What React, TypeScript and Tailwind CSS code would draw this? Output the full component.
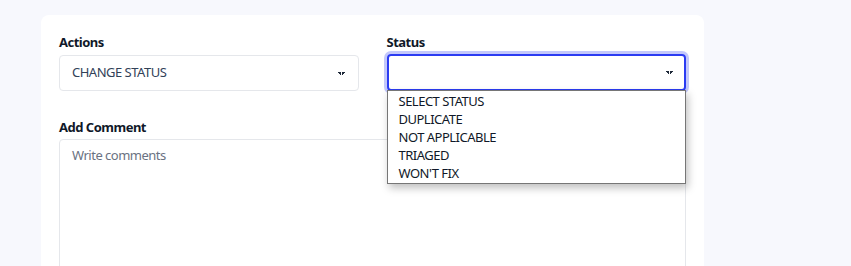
import React from 'react';

const statusOptions = ['SELECT STATUS', 'DUPLICATE', 'NOT APPLICABLE', 'TRIAGED', "WON'T FIX"];

const Caret = () => (
  <svg width="7" height="5" viewBox="0 0 7 5" className="text-gray-800">
    <path d="M0 1h3v1H0zM4 1h3v1H4zM1 2h2v1H1zM4 2h2v1H4zM2 3h1v1H2zM4 3h1v1H4z" fill="currentColor" />
  </svg>
);

const App: React.FC = () => {
  return (
    <div className="h-[266px] overflow-hidden bg-[#f7f8fd] font-['Noto_Sans',sans-serif] tracking-[-0.5px]">
      <div className="ml-[41px] mt-[15px] w-[663px] h-[300px] rounded-lg bg-white px-[18px] pt-[17px]">
        <div className="grid grid-cols-2 gap-x-[28px]">
          {/* Actions */}
          <div>
            <label className="block text-[13px] font-bold leading-[20px] text-gray-900">Actions</label>
            <div className="mt-[3px] flex h-[36px] items-center justify-between rounded border border-gray-200 pl-[12px] pr-[13px] text-[13px] text-slate-700">
              <span>CHANGE STATUS</span>
              <Caret />
            </div>
          </div>

          {/* Status */}
          <div className="relative">
            <label className="block text-[13px] font-bold leading-[20px] text-gray-900">Status</label>
            <div className="mt-[2px] flex h-[37px] items-center justify-end rounded border-2 border-[#2b3cf2] pr-[11px] ring-[3px] ring-[#c3c8fb]">
              <Caret />
            </div>
            <ul className="absolute left-0 top-[58px] z-10 w-full border border-[#767676] bg-white pl-[11px] pt-px pb-px text-[13px] leading-[18px] text-gray-900 shadow-[2px_4px_8px_rgba(0,0,0,0.25)]">
              {statusOptions.map((opt) => (
                <li key={opt}>{opt}</li>
              ))}
            </ul>
          </div>
        </div>

        {/* Comment */}
        <div className="mt-[26px]">
          <label className="block text-[13px] font-bold leading-[20px] text-gray-900">Add Comment</label>
          <div className="mt-[2px] h-[200px] rounded border border-gray-200 px-[12px] pt-[6px] text-[13px] text-gray-500">
            Write comments
          </div>
        </div>
      </div>
    </div>
  );
};

export default App;
